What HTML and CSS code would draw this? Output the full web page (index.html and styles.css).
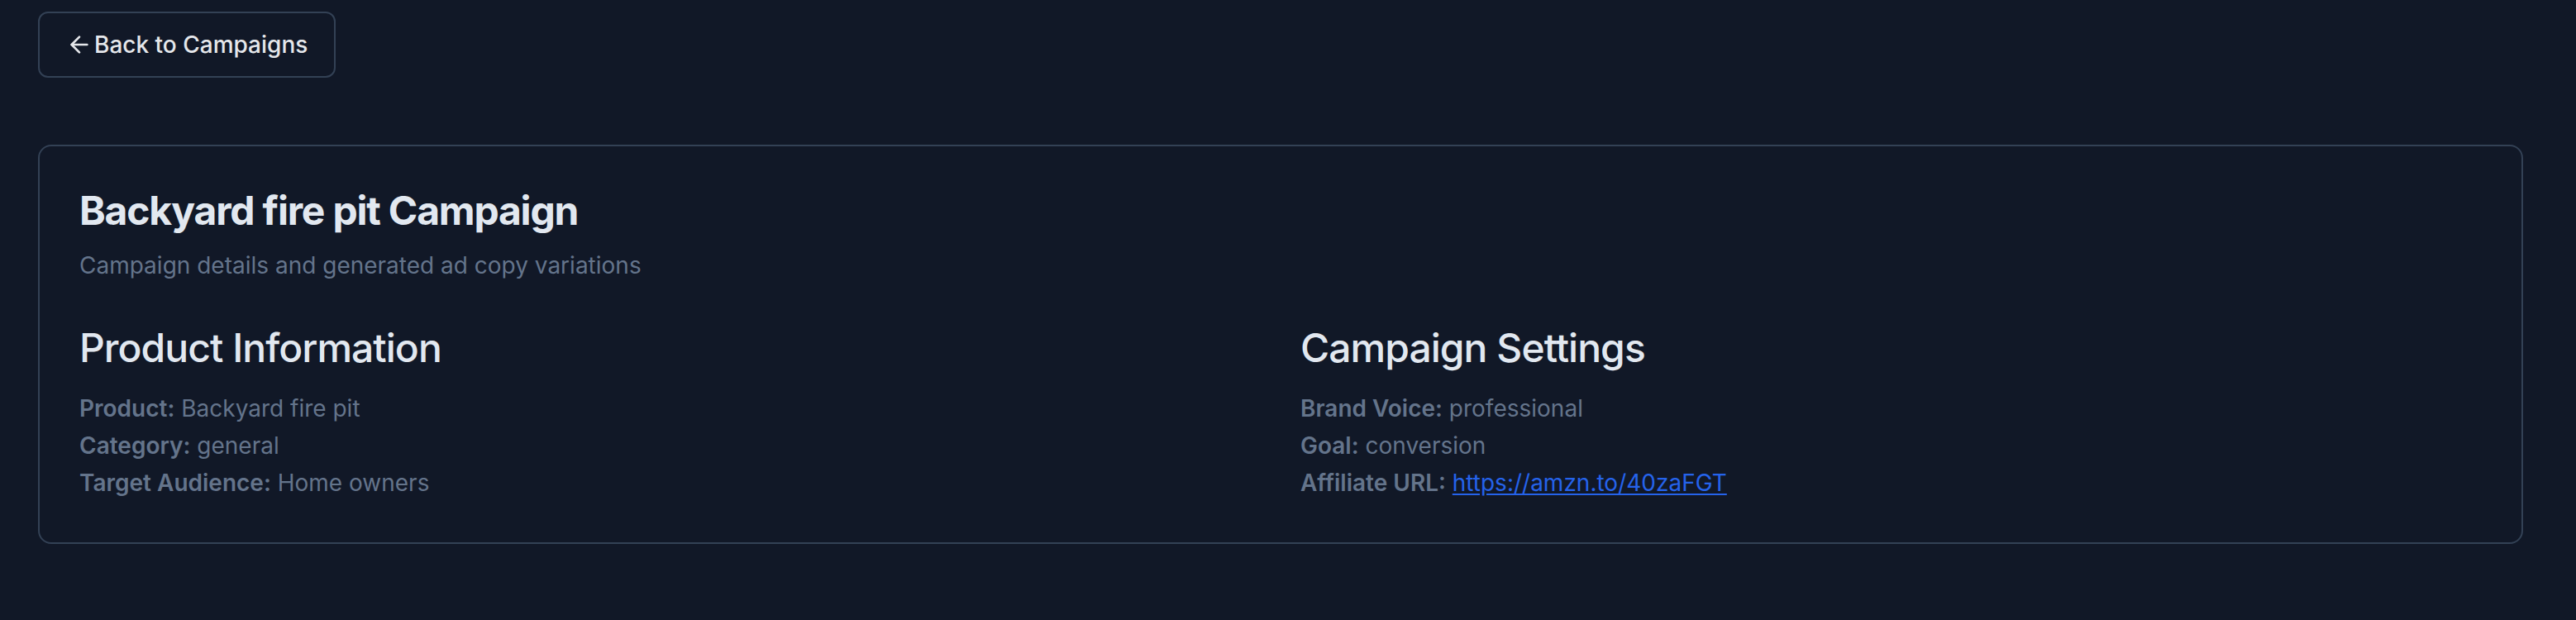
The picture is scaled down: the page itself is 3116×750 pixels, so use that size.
FILE: index.html
```html
<!DOCTYPE html>
<html lang="en">
<head>
<meta charset="utf-8">
<title>Backyard fire pit Campaign</title>
<link rel="stylesheet" href="styles.css">
</head>
<body>
<main class="page">
  <button class="back-btn" type="button">
    <svg class="back-icon" viewBox="0 0 24 24" fill="none" stroke="currentColor" stroke-width="2" stroke-linecap="round" stroke-linejoin="round"><path d="m12 19-7-7 7-7"/><path d="M19 12H5"/></svg>
    <span>Back to Campaigns</span>
  </button>

  <section class="card">
    <header class="card-header">
      <h1 class="card-title">Backyard fire pit Campaign</h1>
      <p class="card-desc">Campaign details and generated ad copy variations</p>
    </header>
    <div class="info-grid">
      <div class="info-col">
        <h2 class="info-heading">Product Information</h2>
        <div class="info-list">
          <p class="info-row"><strong>Product:</strong> Backyard fire pit</p>
          <p class="info-row"><strong>Category:</strong> general</p>
          <p class="info-row"><strong>Target Audience:</strong> Home owners</p>
        </div>
      </div>
      <div class="info-col">
        <h2 class="info-heading">Campaign Settings</h2>
        <div class="info-list">
          <p class="info-row"><strong>Brand Voice:</strong> professional</p>
          <p class="info-row"><strong>Goal:</strong> conversion</p>
          <p class="info-row"><strong>Affiliate URL:</strong> <a class="info-link" href="#">https://amzn.to/40zaFGT</a></p>
        </div>
      </div>
    </div>
  </section>
</main>
</body>
</html>
```

FILE: styles.css
```css
* { box-sizing: border-box; }

html, body {
  margin: 0;
  padding: 0;
  background: #111827;
  overflow: hidden;
}

body {
  font-family: Inter, "Noto Sans", sans-serif;
  color: #e2e8f0;
}

.page {
  padding: 14px 64px 0 46px;
}

.back-btn {
  display: inline-flex;
  align-items: center;
  gap: 2px;
  height: 80px;
  padding: 0 32px;
  background: #111827;
  border: 2px solid #334155;
  border-radius: 12px;
  color: #e5e7eb;
  font-family: Inter, "Noto Sans", sans-serif;
  font-size: 28px;
  font-weight: 500;
  cursor: pointer;
}

.back-icon {
  width: 32px;
  height: 32px;
  flex: none;
}

.card {
  margin-top: 81px;
  border: 2px solid #334155;
  border-radius: 16px;
  background: #111827;
  padding: 48px 48px 52px;
}

.card-header {
  display: flex;
  flex-direction: column;
  gap: 16px;
}

.card-title {
  margin: 0;
  font-size: 48px;
  line-height: 60px;
  font-weight: 700;
  letter-spacing: -0.025em;
  color: #e2e8f0;
}

.card-desc {
  margin: 0;
  font-size: 28px;
  line-height: 40px;
  color: #64748b;
}

.info-grid {
  display: grid;
  grid-template-columns: 1fr 1fr;
  gap: 48px;
  margin-top: 48px;
}

.info-heading {
  margin: 0 0 21px;
  font-size: 48px;
  line-height: 64px;
  font-weight: 500;
  letter-spacing: -0.02em;
  color: #e2e8f0;
}

.info-list {
  display: flex;
  flex-direction: column;
  gap: 5px;
}

.info-row {
  margin: 0;
  font-size: 28px;
  line-height: 40px;
  color: #64748b;
}

.info-row strong {
  font-weight: 600;
}

.info-link {
  color: #2563eb;
  text-decoration: underline;
  text-underline-offset: 3px;
}
```
